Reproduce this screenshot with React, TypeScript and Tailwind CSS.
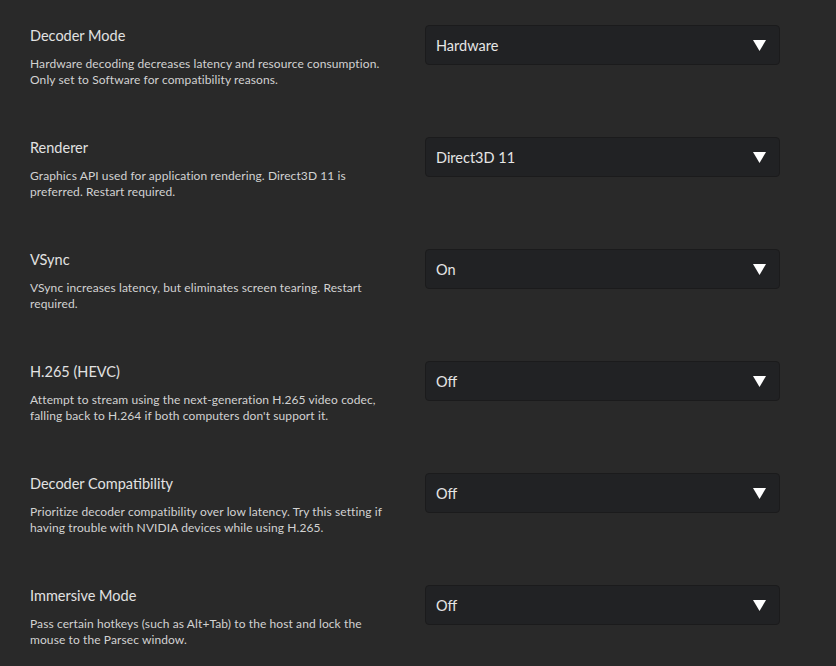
const SETTINGS = [
  {
    title: 'Decoder Mode',
    desc: ['Hardware decoding decreases latency and resource consumption.', 'Only set to Software for compatibility reasons.'],
    value: 'Hardware',
  },
  {
    title: 'Renderer',
    desc: ['Graphics API used for application rendering. Direct3D 11 is', 'preferred. Restart required.'],
    value: 'Direct3D 11',
  },
  {
    title: 'VSync',
    desc: ['VSync increases latency, but eliminates screen tearing. Restart', 'required.'],
    value: 'On',
  },
  {
    title: 'H.265 (HEVC)',
    desc: ['Attempt to stream using the next-generation H.265 video codec,', "falling back to H.264 if both computers don't support it."],
    value: 'Off',
  },
  {
    title: 'Decoder Compatibility',
    desc: ['Prioritize decoder compatibility over low latency. Try this setting if', 'having trouble with NVIDIA devices while using H.265.'],
    value: 'Off',
  },
  {
    title: 'Immersive Mode',
    desc: ['Pass certain hotkeys (such as Alt+Tab) to the host and lock the', 'mouse to the Parsec window.'],
    value: 'Off',
  },
]

function Dropdown({ value }: { value: string }) {
  return (
    <div className="flex h-10 w-[355px] items-center justify-between rounded-[4px] border border-[#1b1b1c] bg-[#212224] pl-[10px] pr-[13px]">
      <span className="pt-[2px] text-[14.5px] text-[#e6e6e6]">{value}</span>
      <svg width="13" height="11" viewBox="0 0 13 11">
        <path d="M0 0 H13 L6.5 11 Z" fill="#ffffff" />
      </svg>
    </div>
  )
}

export default function App() {
  return (
    <div
      className="min-h-[666px] w-[836px] overflow-hidden bg-[#292929] pt-[25px] pl-[30px]"
      style={{ fontFamily: 'Lato, "Open Sans", sans-serif' }}
    >
      {SETTINGS.map((s) => (
        <div key={s.title} className="flex h-[112px] items-start">
          <div className="w-[395px] pt-[1px]">
            <p className="text-[14.5px] leading-[20px] text-[#e2e2e2]">{s.title}</p>
            <p className="mt-[10px] text-[12px] leading-[16px] tracking-[0.1px] text-[#d2d2d2]">
              {s.desc[0]}
              <br />
              {s.desc[1]}
            </p>
          </div>
          <Dropdown value={s.value} />
        </div>
      ))}
    </div>
  )
}
